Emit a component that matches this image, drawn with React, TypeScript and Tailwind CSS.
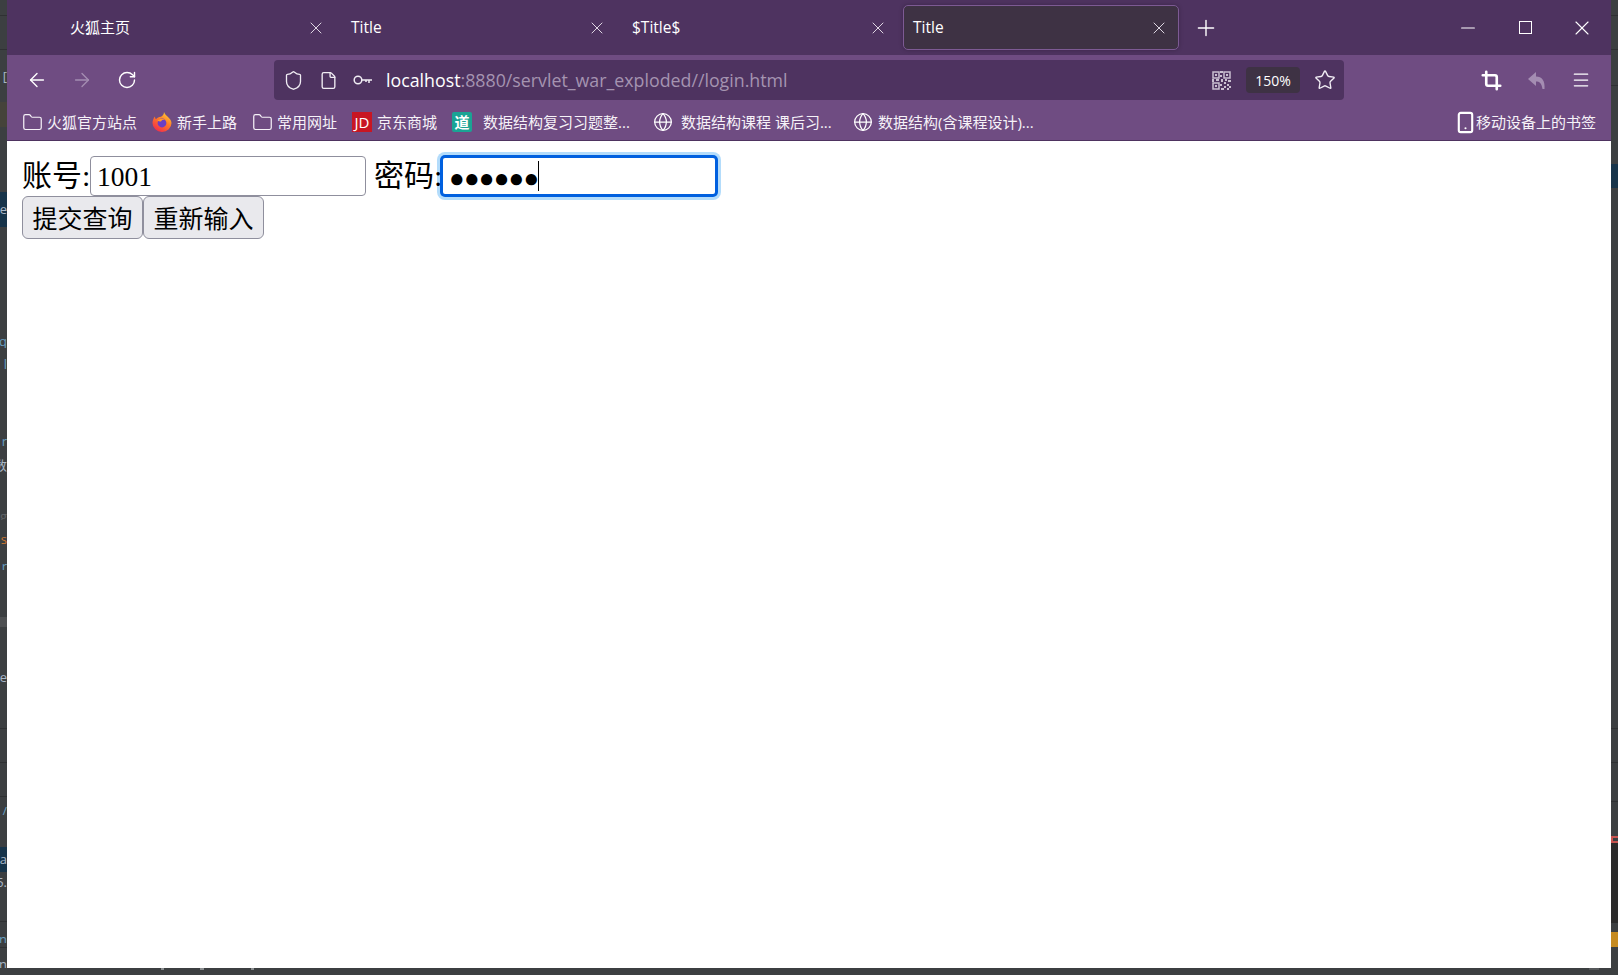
import {
  ArrowLeft,
  ArrowRight,
  Crop,
  File,
  Folder,
  Globe,
  Menu,
  Minus,
  Plus,
  RotateCw,
  Shield,
  Smartphone,
  Star,
  X,
} from "lucide-react";

const uiFont = "font-['Open_Sans','Noto_Sans_CJK_SC',sans-serif]";

// what shows of the IDE behind the browser window, top to bottom
const leftSlices = [
  { cls: "h-[16px] border-b border-[#2f3133]", text: "" },
  { cls: "h-[34px] border-b border-[#2f3133]", text: "" },
  { cls: "h-[52px] text-[#a9b7c6]", text: "[" },
  { cls: "h-[25px] bg-[#45433a]", text: "" },
  { cls: "h-[65px]", text: "" },
  { cls: "h-[35px] bg-[#17344a] text-[#a9b7c6]", text: "se" },
  { cls: "h-[108px]", text: "" },
  { cls: "h-[13px] text-[#6a9fc0]", text: "q" },
  { cls: "h-[10px]", text: "" },
  { cls: "h-[12px] text-[#6a9fc0]", text: "l" },
  { cls: "h-[67px]", text: "" },
  { cls: "h-[9px] text-[#6a9fc0]", text: "r" },
  { cls: "h-[12px]", text: "" },
  { cls: "h-[14px] text-[#a9b7c6]", text: "数" },
  { cls: "h-[40px]", text: "" },
  { cls: "h-[8px] text-[#606366]", text: "g" },
  { cls: "h-[15px]", text: "" },
  { cls: "h-[9px] text-[#cc7832]", text: "s" },
  { cls: "h-[18px]", text: "" },
  { cls: "h-[8px] text-[#6a9fc0]", text: "r" },
  { cls: "h-[47px]", text: "" },
  { cls: "h-[10px] bg-[#4e5052]", text: "" },
  { cls: "h-[45px]", text: "" },
  { cls: "h-[10px] text-[#a9b7c6]", text: "e" },
  { cls: "h-[47px] border-b border-[#2f3133]", text: "" },
  { cls: "h-[34px] border-b border-[#2f3133]", text: "" },
  { cls: "h-[34px] border-b border-[#2f3133]", text: "" },
  { cls: "h-[10px]", text: "" },
  { cls: "h-[8px] text-[#6a9fc0]", text: "/" },
  { cls: "h-[32px]", text: "" },
  { cls: "h-[25px] bg-[#17344a] text-[#a9b7c6]", text: "a" },
  { cls: "h-[3px]", text: "" },
  { cls: "h-[15px] text-[#a9b7c6]", text: "5." },
  { cls: "h-[32px] border-b border-[#2f3133]", text: "" },
  { cls: "h-[13px]", text: "" },
  { cls: "h-[8px] text-[#6a9fc0]", text: "n" },
  { cls: "h-[5px] border-b border-[#2f3133]", text: "" },
  { cls: "h-[12px]", text: "" },
  { cls: "h-[8px] text-[#a9b7c6]", text: "n" },
];

const rightSlices = [
  "h-[16px] border-b border-[#2f3133]",
  "h-[34px] border-b border-[#2f3133]",
  "h-[36px] border-b border-[#2f3133]",
  "h-[78px]",
  "h-[24px] bg-[#17344a]",
  "h-[541px] border-b border-[#2f3133]",
  "h-[34px] border-b border-[#2f3133]",
  "h-[39px] border-b border-[#2f3133]",
  "h-[34px]",
  "h-[7px] border-y-2 border-l-2 border-[#c75450]",
  "h-[80px] bg-[#2b2b2b]",
  "h-[9px]",
  "h-[15px] bg-[#c58a1f]",
];

function Tab({ title, active, small }: { title: string; active?: boolean; small?: boolean }) {
  return (
    <div
      className={
        active
          ? "flex h-[45px] w-[276px] shrink-0 items-center justify-between rounded-[5px] border border-[#7d5a94] bg-[#3e3244] pl-[9px] pr-[9px] shadow-[0_0_4px_rgba(0,0,0,0.25)]"
          : "mr-[5px] flex h-[45px] w-[276px] shrink-0 items-center justify-between pl-[10px] pr-[10px]"
      }
    >
      <span className={small ? "text-[15px] leading-none text-white" : "text-[15.5px] leading-none text-white"}>
        {title}
      </span>
      <X size={20} strokeWidth={1.1} className="text-[#ece6f0]" />
    </div>
  );
}

function KeyIcon() {
  return (
    <svg width="20" height="12" viewBox="0 0 20 12" fill="none" stroke="#f1edf4" strokeWidth="1.5">
      <circle cx="5" cy="6" r="3.8" />
      <path d="M9 6h10M16 6v3M13 6v2" />
    </svg>
  );
}

function QrIcon() {
  return (
    <svg width="19" height="19" viewBox="0 0 19 19" fill="none">
      <path d="M1 1h6v6H1zM12 1h6v6h-6zM1 12h6v6H1z" stroke="#c9bfd0" strokeWidth="1.5" />
      <path d="M3 3h2v2H3zM14 3h2v2h-2zM3 14h2v2H3z" fill="#c9bfd0" />
      <path
        d="M8 0h3v2H8zM8 4h2v2H8zM9 8h2v3H9zM0 8h2v3H0zM4 8h3v2H4zM13 8h2v2h-2zM16 9h3v2h-3zM12 11h2v2h-2zM15 13h2v2h-2zM12 15h2v2h-2zM17 15h2v2h-2zM8 13h2v2H8zM9 17h3v2H9zM15 17h2v2h-2z"
        fill="#c9bfd0"
      />
    </svg>
  );
}

function ReplyIcon() {
  return (
    <svg width="19" height="19" viewBox="0 0 19 19" fill="#a48db2">
      <path d="M9 1 1 8l8 7v-4.500c3.500 0 5.500 1.500 6.500 7.500h2c.8-8-2.500-12.500-8.500-12.500z" />
    </svg>
  );
}

function FirefoxIcon() {
  return (
    <svg width="20" height="20" viewBox="0 0 20 20">
      <defs>
        <linearGradient id="fx" x1="0.8" y1="0" x2="0.2" y2="1">
          <stop offset="0" stopColor="#ffd43a" />
          <stop offset="0.45" stopColor="#ff7a26" />
          <stop offset="1" stopColor="#f0264f" />
        </linearGradient>
      </defs>
      <path
        d="M12 0c.6 2 2 3.200 3.500 4.600C18 7 19.500 9 19.500 11A9.500 9 0 0 1 .5 11C.5 8.500 1.500 6 3 4.500c0 1.300.4 2.200 1 2.800C5 5.500 7 5 9 4.800 10.500 4 12 2.500 12 0z"
        fill="url(#fx)"
      />
      <circle cx="10" cy="11" r="4.400" fill="#6b3fc4" />
      <path d="M5.500 8.500C7.500 6.500 11 6.300 13 7.500c-2.500 0-3.500.8-4 2-1.300.2-2.500-.2-3.500-1z" fill="#ff9a2b" />
    </svg>
  );
}

function Bookmark({ icon, label, width }: { icon: React.ReactNode; label: string; width: string }) {
  return (
    <div className={`flex shrink-0 items-center ${width}`}>
      {icon}
      <span className="whitespace-nowrap text-[15px] leading-none text-[#f6f2f8]">{label}</span>
    </div>
  );
}

function TabBar() {
  return (
    <div className="flex h-[55px] shrink-0 bg-[#4e3360] pl-[53px] pt-[5px]">
      <Tab title="火狐主页" small />
      <Tab title="Title" />
      <Tab title="$Title$" />
      <Tab title="Title" active />
      <div className="ml-[14px] flex h-[45px] items-center">
        <Plus size={26} strokeWidth={1.3} className="text-white" />
      </div>
      <div className="ml-auto flex h-[45px] items-center gap-[40px] pr-[18px] text-white">
        <Minus size={22} strokeWidth={1.1} />
        <div className="h-[13px] w-[13px] border border-white" />
        <X size={24} strokeWidth={1.1} className="-ml-[2px] -mr-[1px]" />
      </div>
    </div>
  );
}

function Toolbar() {
  return (
    <div className="flex h-[45px] shrink-0 items-center bg-[#6f4c82] pl-[19px] pt-[5px] text-white">
      <ArrowLeft size={22} strokeWidth={1.5} />
      <ArrowRight size={22} strokeWidth={1.5} className="ml-[23px] text-[#a48db2]" />
      <RotateCw size={20} strokeWidth={1.7} className="ml-[24px]" />
      <div className="ml-[137px] flex h-[40px] w-[1070px] items-center rounded-[4px] bg-[#4e3360] pl-[9px] pr-[8px]">
        <Shield size={21} strokeWidth={1.5} className="text-[#f1edf4]" />
        <File size={19} strokeWidth={1.7} className="ml-[15px] text-[#f1edf4]" />
        <span className="ml-[15px] flex">
          <KeyIcon />
        </span>
        <span className="ml-[13px] pt-[1px] text-[17.8px] leading-none text-white">
          localhost<span className="text-[#a594b1]">:8880/servlet_war_exploded//login.html</span>
        </span>
        <span className="ml-auto flex">
          <QrIcon />
        </span>
        <span className="ml-[15px] flex h-[26px] w-[54px] items-center justify-center rounded-[4px] bg-[#3e3244] text-[14px] text-white">
          150%
        </span>
        <Star size={22} strokeWidth={1.5} className="ml-[14px] text-[#f1edf4]" />
      </div>
      <Crop size={21} strokeWidth={3} className="ml-[137px]" />
      <span className="ml-[25px] flex">
        <ReplyIcon />
      </span>
      <Menu size={20} strokeWidth={1.5} className="ml-[25px]" />
    </div>
  );
}

function BookmarksBar() {
  return (
    <div className="flex h-[41px] shrink-0 items-center border-b border-[#4e3360] bg-[#6f4c82] pl-[15px] pr-[15px] pt-[4px]">
      <Bookmark
        width="w-[130px]"
        label="火狐官方站点"
        icon={<Folder size={21} strokeWidth={1.4} className="mr-[4px] text-[#f6f2f8]" />}
      />
      <Bookmark
        width="w-[100px]"
        label="新手上路"
        icon={
          <span className="mr-[5px] flex">
            <FirefoxIcon />
          </span>
        }
      />
      <Bookmark
        width="w-[100px]"
        label="常用网址"
        icon={<Folder size={21} strokeWidth={1.4} className="mr-[4px] text-[#f6f2f8]" />}
      />
      <Bookmark
        width="w-[100px]"
        label="京东商城"
        icon={
          <span className="mr-[5px] flex h-[20px] w-[20px] items-center justify-center bg-[#c81623] text-[15px] leading-none text-white">
            JD
          </span>
        }
      />
      <Bookmark
        width="w-[201px]"
        label="数据结构复习习题整..."
        icon={
          <span className="mr-[11px] flex h-[20px] w-[20px] items-center justify-center rounded-[2px] bg-[#1aa394] text-[15px] font-bold leading-none text-white">
            道
          </span>
        }
      />
      <Bookmark
        width="w-[200px]"
        label="数据结构课程 课后习..."
        icon={<Globe size={20} strokeWidth={1.5} className="mr-[8px] text-white" />}
      />
      <Bookmark
        width="w-auto"
        label="数据结构(含课程设计)..."
        icon={<Globe size={20} strokeWidth={1.5} className="mr-[5px] text-white" />}
      />
      <div className="ml-auto">
        <Bookmark
          width="w-auto"
          label="移动设备上的书签"
          icon={<Smartphone size={23} strokeWidth={2.2} className="-ml-[2px] -mr-[1px] text-white" />}
        />
      </div>
    </div>
  );
}

function LoginForm() {
  return (
    <div className="min-h-0 flex-1 bg-white pl-[15px] pt-[15px] font-['Liberation_Serif','Noto_Sans_CJK_SC',serif] text-black">
      <div className="flex h-[40px] items-center text-[30px] leading-none">
        <span className="w-[68px] whitespace-nowrap">账号:</span>
        <input
          readOnly
          value="1001"
          className="h-[40px] w-[276px] rounded-[4px] border border-[#8f8f9d] bg-white px-[6px] pt-[1px] text-[27.5px] outline-none"
        />
        <span className="relative z-10 ml-[8px] w-[67px] whitespace-nowrap">密码:</span>
        <div className="flex h-[40px] w-[276px] items-center rounded-[4px] border-2 border-[#0060df] bg-white pl-[6px] font-['Liberation_Sans',sans-serif] text-[26px] shadow-[0_0_0_1px_#0060df,0_0_0_4px_#b3dcfb]">
          <span className="mt-[3px] tracking-[-0.8px]">●●●●●●</span>
          <span className="h-[30px] w-px bg-black" />
        </div>
      </div>
      <div className="flex font-['Noto_Sans_CJK_SC',sans-serif]">
        <button className="h-[43px] w-[121px] rounded-[6px] border border-[#8f8f9d] bg-[#e9e9ed] text-[25px] leading-none">
          提交查询
        </button>
        <button className="h-[43px] w-[121px] rounded-[6px] border border-[#8f8f9d] bg-[#e9e9ed] text-[25px] leading-none">
          重新输入
        </button>
      </div>
    </div>
  );
}

export default function App() {
  return (
    <div className={`flex h-[975px] w-[1618px] flex-col overflow-hidden bg-[#3c3f41] ${uiFont}`}>
      <div className="flex h-[968px] shrink-0">
        <div className="flex w-[7px] shrink-0 flex-col overflow-hidden">
          {leftSlices.map((s, i) => (
            <div key={i} className={`flex shrink-0 items-center justify-end overflow-hidden text-[13px] leading-none ${s.cls}`}>
              {s.text}
            </div>
          ))}
        </div>
        <div className="flex w-[1604px] flex-col">
          <TabBar />
          <Toolbar />
          <BookmarksBar />
          <LoginForm />
        </div>
        <div className="flex w-[7px] shrink-0 flex-col overflow-hidden">
          {rightSlices.map((cls, i) => (
            <div key={i} className={`shrink-0 ${cls}`} />
          ))}
        </div>
      </div>
      <div className="flex h-[7px] items-start pl-[161px]">
        <div className="h-[2px] w-[3px] bg-[#8a8d8f]" />
        <div className="ml-[36px] h-[2px] w-[4px] bg-[#8a8d8f]" />
        <div className="ml-[47px] h-[2px] w-[3px] bg-[#8a8d8f]" />
        <div className="ml-[1335px] h-[2px] w-[10px] bg-[#55585a]" />
      </div>
    </div>
  );
}
